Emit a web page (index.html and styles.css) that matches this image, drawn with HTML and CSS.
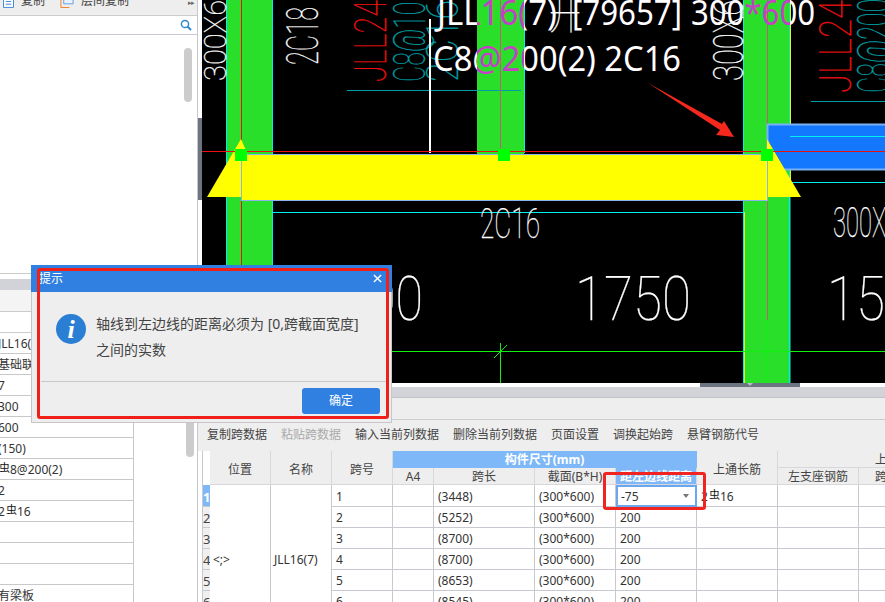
FILE: index.html
```html
<!DOCTYPE html>
<html lang="zh-CN">
<head>
<meta charset="utf-8">
<title>JLL16 平法表格</title>
<link rel="stylesheet" href="styles.css">
</head>
<body>
<div class="app">
  <aside class="left">
    <div class="left-tools">
      <span class="tool"><svg class="tool-icon" viewBox="0 0 12 15"><path d="M.5.5h11v14H.5z" fill="#fff" stroke="#2f80d8"/><path d="M3 5h6M3 8h6M3 11h6" stroke="#2f80d8"/></svg>复制</span>
      <span class="tool"><svg class="tool-icon wide" viewBox="0 0 14 15"><path d="M.5 3.500v11h9" fill="none" stroke="#f07a1a"/><path d="M3.500.5h10v10h-10z" fill="#eaf3fd" stroke="#5a9be0"/></svg>层间复制</span>
      <span class="more">▸▸</span>
    </div>
    <div class="search">
      <svg class="search-icon" viewBox="0 0 12 12"><circle cx="5" cy="5" r="3.600" fill="none" stroke="#2f88cc" stroke-width="1.500"/><path d="M7.500 7.500l3.500 3.500" stroke="#2f88cc" stroke-width="2"/></svg>
    </div>
    <div class="tree"><span class="thumb thumb-top"></span></div>
    <div class="gray-bar"></div>
    <div class="prop-tabs"></div>
    <div class="prop-head"></div>
    <div class="props">
      <span class="thumb thumb-bottom"></span>
      <div class="prop-row"><span class="prop-val">JLL16(7)</span></div>
      <div class="prop-row"><span class="prop-val">基础联系梁</span></div>
      <div class="prop-row"><span class="prop-val">7</span></div>
      <div class="prop-row"><span class="prop-val">300</span></div>
      <div class="prop-row"><span class="prop-val">600</span></div>
      <div class="prop-row"><span class="prop-val">(150)</span></div>
      <div class="prop-row"><span class="prop-val"><span class="rb">虫</span>8@200(2)</span></div>
      <div class="prop-row"><span class="prop-val">2</span></div>
      <div class="prop-row"><span class="prop-val">2<span class="rb">虫</span>16</span></div>
      <div class="prop-row"><span class="prop-val"></span></div>
      <div class="prop-row"><span class="prop-val"></span></div>
      <div class="prop-row"><span class="prop-val"></span></div>
      <div class="prop-row"><span class="prop-val">有梁板</span></div>
    </div>
  </aside>

  <main class="right">
    <div class="top-row">
      <div class="vsplit"><span class="vsplit-handle"></span></div>
      <svg class="cad" viewBox="202 0 683 383" width="683" height="383">
        <defs>
          <linearGradient id="xor" gradientUnits="userSpaceOnUse" x1="202" y1="0" x2="885" y2="0">
            <stop offset="0.4026" stop-color="#fff"/><stop offset="0.4026" stop-color="#c63fc6"/>
            <stop offset="0.4714" stop-color="#c63fc6"/><stop offset="0.4714" stop-color="#fff"/>
            <stop offset="0.7936" stop-color="#fff"/><stop offset="0.7936" stop-color="#c63fc6"/>
            <stop offset="0.8609" stop-color="#c63fc6"/><stop offset="0.8609" stop-color="#fff"/>
          </linearGradient>
        </defs>
        <!-- columns -->
        <rect class="col" x="226.500" y="-1" width="46" height="385"/>
        <rect class="col-mid" x="477" y="-1" width="47" height="155"/>
        <line class="ln cyan" x1="524.500" y1="0" x2="524.500" y2="153"/>
        <rect class="col" x="743.500" y="-1" width="46.500" height="385"/>
        <line class="ln yellow" x1="790.500" y1="0" x2="790.500" y2="182"/>
        <line class="ln yellow" x1="744.500" y1="212" x2="744.500" y2="383"/>

        <!-- rotated stroke labels -->
        <text class="thin w s32" transform="translate(226,81) rotate(-90)" textLength="113" lengthAdjust="spacingAndGlyphs">300X600</text>
        <text class="thin w s45" transform="translate(318,65) rotate(-90)" textLength="58" lengthAdjust="spacingAndGlyphs">2C18</text>
        <text class="thin r s45" transform="translate(386,82) rotate(-90)" textLength="82" lengthAdjust="spacingAndGlyphs">JLL24</text>
        <text class="thin t s45" transform="translate(425,82) rotate(-90)" textLength="123" lengthAdjust="spacingAndGlyphs">C8@100(2)</text>
        <text class="thin t s45" transform="translate(458,82) rotate(-90)" textLength="82" lengthAdjust="spacingAndGlyphs">2C16</text>
        <text class="thin w s42" transform="translate(743,81) rotate(-90)" textLength="113" lengthAdjust="spacingAndGlyphs">300X600</text>
        <text class="thin r s45" transform="translate(851,93) rotate(-90)" textLength="93" lengthAdjust="spacingAndGlyphs">JLL24</text>
        <text class="thin t s45" transform="translate(889,93) rotate(-90)" textLength="123" lengthAdjust="spacingAndGlyphs">C8@200(2)</text>

        <!-- lines -->
        <line class="ln teal" x1="347" y1="90.500" x2="521" y2="90.500"/>
        <line class="ln teal" x1="811" y1="101.500" x2="885" y2="101.500"/>
        <line class="ln white2" x1="430" y1="19" x2="430" y2="153"/>
        <line class="ln cyan" x1="272" y1="212.500" x2="744" y2="212.500"/>
        <line class="ln pink" x1="500.500" y1="0" x2="500.500" y2="153"/>
        <line class="ln red" x1="241.500" y1="0" x2="241.500" y2="265"/>
        <line class="ln pink" x1="767.500" y1="0" x2="767.500" y2="320"/>

        <!-- blue beam -->
        <rect class="beam-blue" x="767.500" y="124.500" width="130" height="45"/>
        <line class="ln cyan" x1="790" y1="136.500" x2="885" y2="136.500"/>
        <line class="ln cyan" x1="790" y1="182.500" x2="885" y2="182.500"/>
        <line class="ln cyan" x1="789.500" y1="182" x2="789.500" y2="383"/>

        <!-- yellow beam with supports -->
        <path class="tri" d="M241 139 207 197H241V155H248Z"/>
        <path class="tri" d="M767 139 801 197H767Z"/>
        <rect class="beam" x="241.500" y="154.500" width="526" height="46"/>
        <line class="ln red" x1="202" y1="151.500" x2="885" y2="151.500"/>
        <rect class="node" x="235" y="149" width="12" height="12"/>
        <rect class="node" x="498" y="149" width="12" height="12"/>
        <rect class="node" x="761" y="149" width="12" height="12"/>

        <!-- big annotation -->
        <text class="note" x="437" y="25" textLength="120" lengthAdjust="spacingAndGlyphs">JLL16(7)</text>
        <text class="note" x="572" y="25" textLength="110" lengthAdjust="spacingAndGlyphs">[79657]</text>
        <text class="note" x="691" y="25" textLength="124" lengthAdjust="spacingAndGlyphs">300*600</text>
        <text class="note" x="433" y="71" textLength="248" lengthAdjust="spacingAndGlyphs">C8@200(2) 2C16</text>
        <text class="thin w s42" x="549" y="29" textLength="32" lengthAdjust="spacingAndGlyphs">开</text>

        <!-- horizontal stroke labels -->
        <text class="thin w s42" x="480" y="238" textLength="60" lengthAdjust="spacingAndGlyphs">2C16</text>
        <text class="thin w s42" x="833" y="237" textLength="92" lengthAdjust="spacingAndGlyphs">300X600</text>
        <text class="thin w s62" x="313" y="320" textLength="110" lengthAdjust="spacingAndGlyphs">1500</text>
        <text class="thin w s62" x="575" y="320" textLength="116" lengthAdjust="spacingAndGlyphs">1750</text>
        <text class="thin w s62" x="827" y="320" textLength="116" lengthAdjust="spacingAndGlyphs">1500</text>

        <!-- axis -->
        <line class="ln green" x1="202" y1="351.500" x2="885" y2="351.500"/>
        <line class="ln green" x1="500.500" y1="343" x2="500.500" y2="383"/>
        <line class="ln green" x1="494" y1="358" x2="507" y2="345"/>
        <line class="ln green" x1="767.500" y1="320" x2="767.500" y2="383"/>
        <line class="ln green" x1="761" y1="358" x2="774" y2="345"/>

        <!-- callout arrow -->
        <polygon class="arrow" points="648,83 722,124 724,121 734,137 716,135 720,130"/>
      </svg>
    </div>
    <div class="hsplit"><span class="hsplit-handle"></span></div>
    <div class="gray-strip"></div>
    <div class="panel-tabs"></div>
    <div class="grid-tools">
      <span>复制跨数据</span><span class="off">粘贴跨数据</span><span>输入当前列数据</span><span>删除当前列数据</span><span>页面设置</span><span>调换起始跨</span><span>悬臂钢筋代号</span>
    </div>
    <div class="grid-wrap">
      <table class="grid">
        <colgroup>
          <col class="c-no"><col class="c-60"><col class="c-60"><col class="c-60"><col class="c-40"><col class="c-100"><col class="c-80"><col class="c-80"><col class="c-80"><col class="c-80"><col class="c-80"><col class="c-80">
        </colgroup>
        <thead>
          <tr>
            <th class="corner" rowspan="2"></th>
            <th class="tall" rowspan="2">位置</th><th class="tall" rowspan="2">名称</th><th class="tall" rowspan="2">跨号</th>
            <th class="blue-group" colspan="4">构件尺寸(mm)</th>
            <th class="tall" rowspan="2">上通长筋</th>
            <th colspan="3">上部钢筋</th>
          </tr>
          <tr>
            <th>A4</th><th>跨长</th><th>截面(B*H)</th><th class="blue-head">距左边线距离</th>
            <th>左支座钢筋</th><th>跨中钢筋</th><th>右支座钢筋</th>
          </tr>
        </thead>
        <tbody>
          <tr><td class="no on">1</td><td class="pos" rowspan="7">&lt;;&gt;</td><td class="name" rowspan="7">JLL16(7)</td><td>1</td><td></td><td>(3448)</td><td>(300*600)</td><td class="active">-75<span class="caret"></span></td><td>2<span class="rb">虫</span>16</td><td></td><td></td><td></td></tr>
          <tr><td class="no">2</td><td>2</td><td></td><td>(5252)</td><td>(300*600)</td><td>200</td><td></td><td></td><td></td><td></td></tr>
          <tr><td class="no">3</td><td>3</td><td></td><td>(8700)</td><td>(300*600)</td><td>200</td><td></td><td></td><td></td><td></td></tr>
          <tr><td class="no">4</td><td>4</td><td></td><td>(8700)</td><td>(300*600)</td><td>200</td><td></td><td></td><td></td><td></td></tr>
          <tr><td class="no">5</td><td>5</td><td></td><td>(8653)</td><td>(300*600)</td><td>200</td><td></td><td></td><td></td><td></td></tr>
          <tr><td class="no">6</td><td>6</td><td></td><td>(8545)</td><td>(300*600)</td><td>200</td><td></td><td></td><td></td><td></td></tr>
          <tr><td class="no">7</td><td>7</td><td></td><td></td><td>(300*600)</td><td>200</td><td></td><td></td><td></td><td></td></tr>
        </tbody>
      </table>
      <span class="cell-mark"></span>
    </div>
  </main>
</div>

<section class="dialog">
  <header class="dialog-title"><span>提示</span><svg class="close" viewBox="0 0 10 10"><path d="M1 1l8 8M9 1l-8 8" stroke="#fff" stroke-width="1.600"/></svg></header>
  <div class="dialog-body">
    <svg class="info" viewBox="0 0 30 30"><circle cx="15" cy="15" r="15" fill="#2a7fd4"/><text class="info-i" x="15" y="24">i</text></svg>
    <p class="dialog-msg">轴线到左边线的距离必须为 [0,跨截面宽度]<br>之间的实数</p>
  </div>
  <div class="dialog-foot"><button class="ok" type="button">确定</button></div>
  <span class="dialog-mark"></span>
</section>
</body>
</html>
```
FILE: styles.css
```css
* { box-sizing: border-box; }
html, body { margin: 0; height: 602px; overflow: hidden; background: #fff; }
body {
  position: relative;
  width: 885px;
  font: 12px/16px "Noto Sans", "Noto Sans CJK SC", sans-serif;
  color: #444;
}
.app { display: flex; width: 885px; height: 602px; }

/* left column */
.left { position: relative; width: 198px; height: 602px; border-right: 1px solid #c8c8cc; display: flex; flex-direction: column; overflow: hidden; }
.left > * { flex: none; }
.left-tools { height: 16px; background: #eee; border-bottom: 1px solid #ccc; display: flex; align-items: flex-end; gap: 6px; padding: 0 3px 6px; position: relative; }
.tool { display: flex; align-items: center; gap: 7px; white-space: nowrap; margin-right: 9px; }
.tool-icon { width: 11px; height: 14px; }
.tool-icon.wide { width: 14px; }
.more { position: absolute; right: 3px; top: -5px; font-size: 7px; color: #666; letter-spacing: -1px; }
.search { height: 19px; border-bottom: 1px solid #c8c8d4; display: flex; justify-content: flex-end; align-items: center; padding-right: 5px; }
.search-icon { width: 12px; height: 12px; }
.tree { position: relative; height: 239px; border-bottom: 1px solid #ccc; }
.thumb { position: absolute; background: #ccc; border-radius: 4px; width: 8px; }
.thumb-top { left: 184px; top: 13px; height: 54px; }
.gray-bar { height: 11px; background: #d2d3d8; margin-top: 5px; }
.prop-tabs { height: 22px; border-bottom: 1px solid #ccc; background: #f4f4f4; }
.prop-head { height: 20px; }
.props { position: relative; border-top: 1px solid #ccc; }
.thumb-bottom { left: 186px; top: 68px; height: 56px; }
.prop-row { height: 21px; width: 134px; border-bottom: 1px solid #c8c8c8; border-right: 1px solid #c8c8c8; padding: 3px 0 0 0; color: #333; }
.prop-val { display: block; margin-left: -2px; white-space: nowrap; overflow: hidden; }
.rb { font-size: 11px; color: #111; position: relative; top: -2px; margin: 0 0 0 1px; }

/* right column */
.right { width: 687px; height: 602px; display: flex; flex-direction: column; overflow: hidden; }
.top-row { display: flex; height: 383px; flex: none; }
.vsplit { position: relative; width: 4px; background: #fff; }
.vsplit-handle { position: absolute; left: 0; top: 118px; width: 4px; height: 82px; background: #6b7480; }
.cad { display: block; background: #000; }
.hsplit { position: relative; height: 4px; background: #fff; flex: none; }
.hsplit-handle { position: absolute; left: 502px; top: 0; width: 100px; height: 4px; background: #6b7480; }
.hsplit-handle::after { content: ""; position: absolute; left: 47px; top: 0; border: 3px solid transparent; border-top: 3px solid #b8bcc2; border-bottom: 0; }
.gray-strip { height: 11px; background: #d2d3d8; border-bottom: 1px solid #c4c4c8; flex: none; }
.panel-tabs { height: 22px; background: #eee; border-bottom: 1px solid #ccc; flex: none; }
.grid-tools { height: 31px; background: #eee; flex: none; display: flex; align-items: center; gap: 14px; padding: 0 0 1px 9px; white-space: nowrap; }
.grid-tools .off { color: #aaa; }
.grid-wrap { position: relative; flex: 1; margin-left: 4px; border-left: 1px solid #c8c8d0; overflow: hidden; }
.grid { table-layout: fixed; border-collapse: separate; border-spacing: 0; width: 811px; }
.c-no { width: 7px; } .c-60 { width: 61px; } .c-40 { width: 41px; } .c-100 { width: 101px; } .c-80 { width: 81px; }
.grid th { height: 17px; padding: 0; font-weight: 400; background: #eee; border-right: 1px solid #d8d8dc; border-bottom: 1px solid #d8d8dc; text-align: center; vertical-align: middle; white-space: nowrap; overflow: hidden; line-height: 15px; color: #444; }
.grid th.tall { padding-top: 3px; }
.grid th.corner { background: #fff; border: 0; }
.grid th.blue-group { background: #7eb8f8; color: #fff; font-weight: 700; border-color: #7eb8f8; }
.grid th.blue-head { background: #7eb8f8; color: #fff; font-weight: 700; }
.grid td { height: 21px; padding: 2px 0 0 4px; border-right: 1px solid #c8c8d0; border-bottom: 1px solid #c8c8d0; white-space: nowrap; overflow: hidden; color: #333; }
.grid td.no { padding: 2px 0 0; font-size: 13px; background: #f0f0f0; border-right: 0; color: #444; }
.grid td.no.on { background: #7eb8f8; color: #fff; font-weight: 700; }
.grid td.pos { padding-left: 3px; }
.grid td.name { padding-left: 3px; }
.grid td.active { position: relative; border: 2px solid #6ba7ee; padding-left: 3px; }
.caret { position: absolute; right: 6px; top: 7px; border: 3px solid transparent; border-top: 4px solid #777; border-bottom: 0; }
.cell-mark { position: absolute; left: 400px; top: 21px; width: 103px; height: 38px; border: 3px solid #f02420; border-radius: 3px; }

/* dialog */
.dialog { position: absolute; left: 31px; top: 265px; width: 361px; height: 158px; background: #eee; border: 1px solid #c6c6ca; border-top: 0; display: flex; flex-direction: column; }
.dialog-title { height: 27px; margin: 0 -1px; background: #2f80e0; color: #fff; display: flex; justify-content: space-between; align-items: center; padding: 0 10px 0 8px; flex: none; }
.close { width: 9px; height: 9px; }
.dialog-body { flex: 1; display: flex; align-items: flex-start; padding: 22px 0 0 24px; }
.info { width: 30px; height: 30px; flex: none; }
.info-i { font: italic 700 26px "Liberation Serif", serif; fill: #fff; text-anchor: middle; }
.dialog-msg { margin: -3px 0 0 10px; font-size: 14px; line-height: 26px; color: #444; white-space: nowrap; }
.dialog-foot { height: 41px; margin: 0 5px 0 9px; border-top: 1px solid #c8c8c8; display: flex; justify-content: flex-end; align-items: flex-start; padding: 6px 6px 0 0; flex: none; }
.ok { width: 78px; height: 26px; border: 0; border-radius: 3px; background: #2f80e0; color: #fff; font: inherit; padding: 0; }
.dialog-mark { position: absolute; left: 5px; top: 3px; width: 352px; height: 151px; border: 3px solid #f02018; border-radius: 3px; pointer-events: none; }

/* CAD drawing */
.col { fill: #2adf2a; stroke: #00f0f0; stroke-width: 1; }
.col-mid { fill: #2adf2a; }
.beam { fill: #ff0; stroke: #8ab4f0; stroke-width: 1; }
.beam-blue { fill: #1478ff; stroke: #7ab0f4; stroke-width: 2; }
.tri { fill: #ff0; }
.node { fill: #0f0; }
.arrow { fill: #f5281e; }
.ln { stroke-width: 1; fill: none; }
.cyan { stroke: #00f0f0; }
.teal { stroke: #009ca8; }
.yellow { stroke: #e8f030; }
.white2 { stroke: #fff; stroke-width: 2; }
.red { stroke: #ee1010; }
.pink { stroke: #c0606a; }
.green { stroke: #10f010; }
.thin { font-family: Roboto, "Noto Sans CJK SC", sans-serif; font-weight: 100; stroke-width: .25; }
.thin.w { fill: #fff; stroke: #fff; }
.thin.r { fill: #f01010; stroke: #f01010; }
.thin.t { fill: #00a0a8; stroke: #00a0a8; }
.s32 { font-size: 32px; }
.s42 { font-size: 42px; }
.s45 { font-size: 45px; }
.s62 { font-size: 62px; }
.note { font: 34px "Noto Sans", sans-serif; fill: url(#xor); }
```
